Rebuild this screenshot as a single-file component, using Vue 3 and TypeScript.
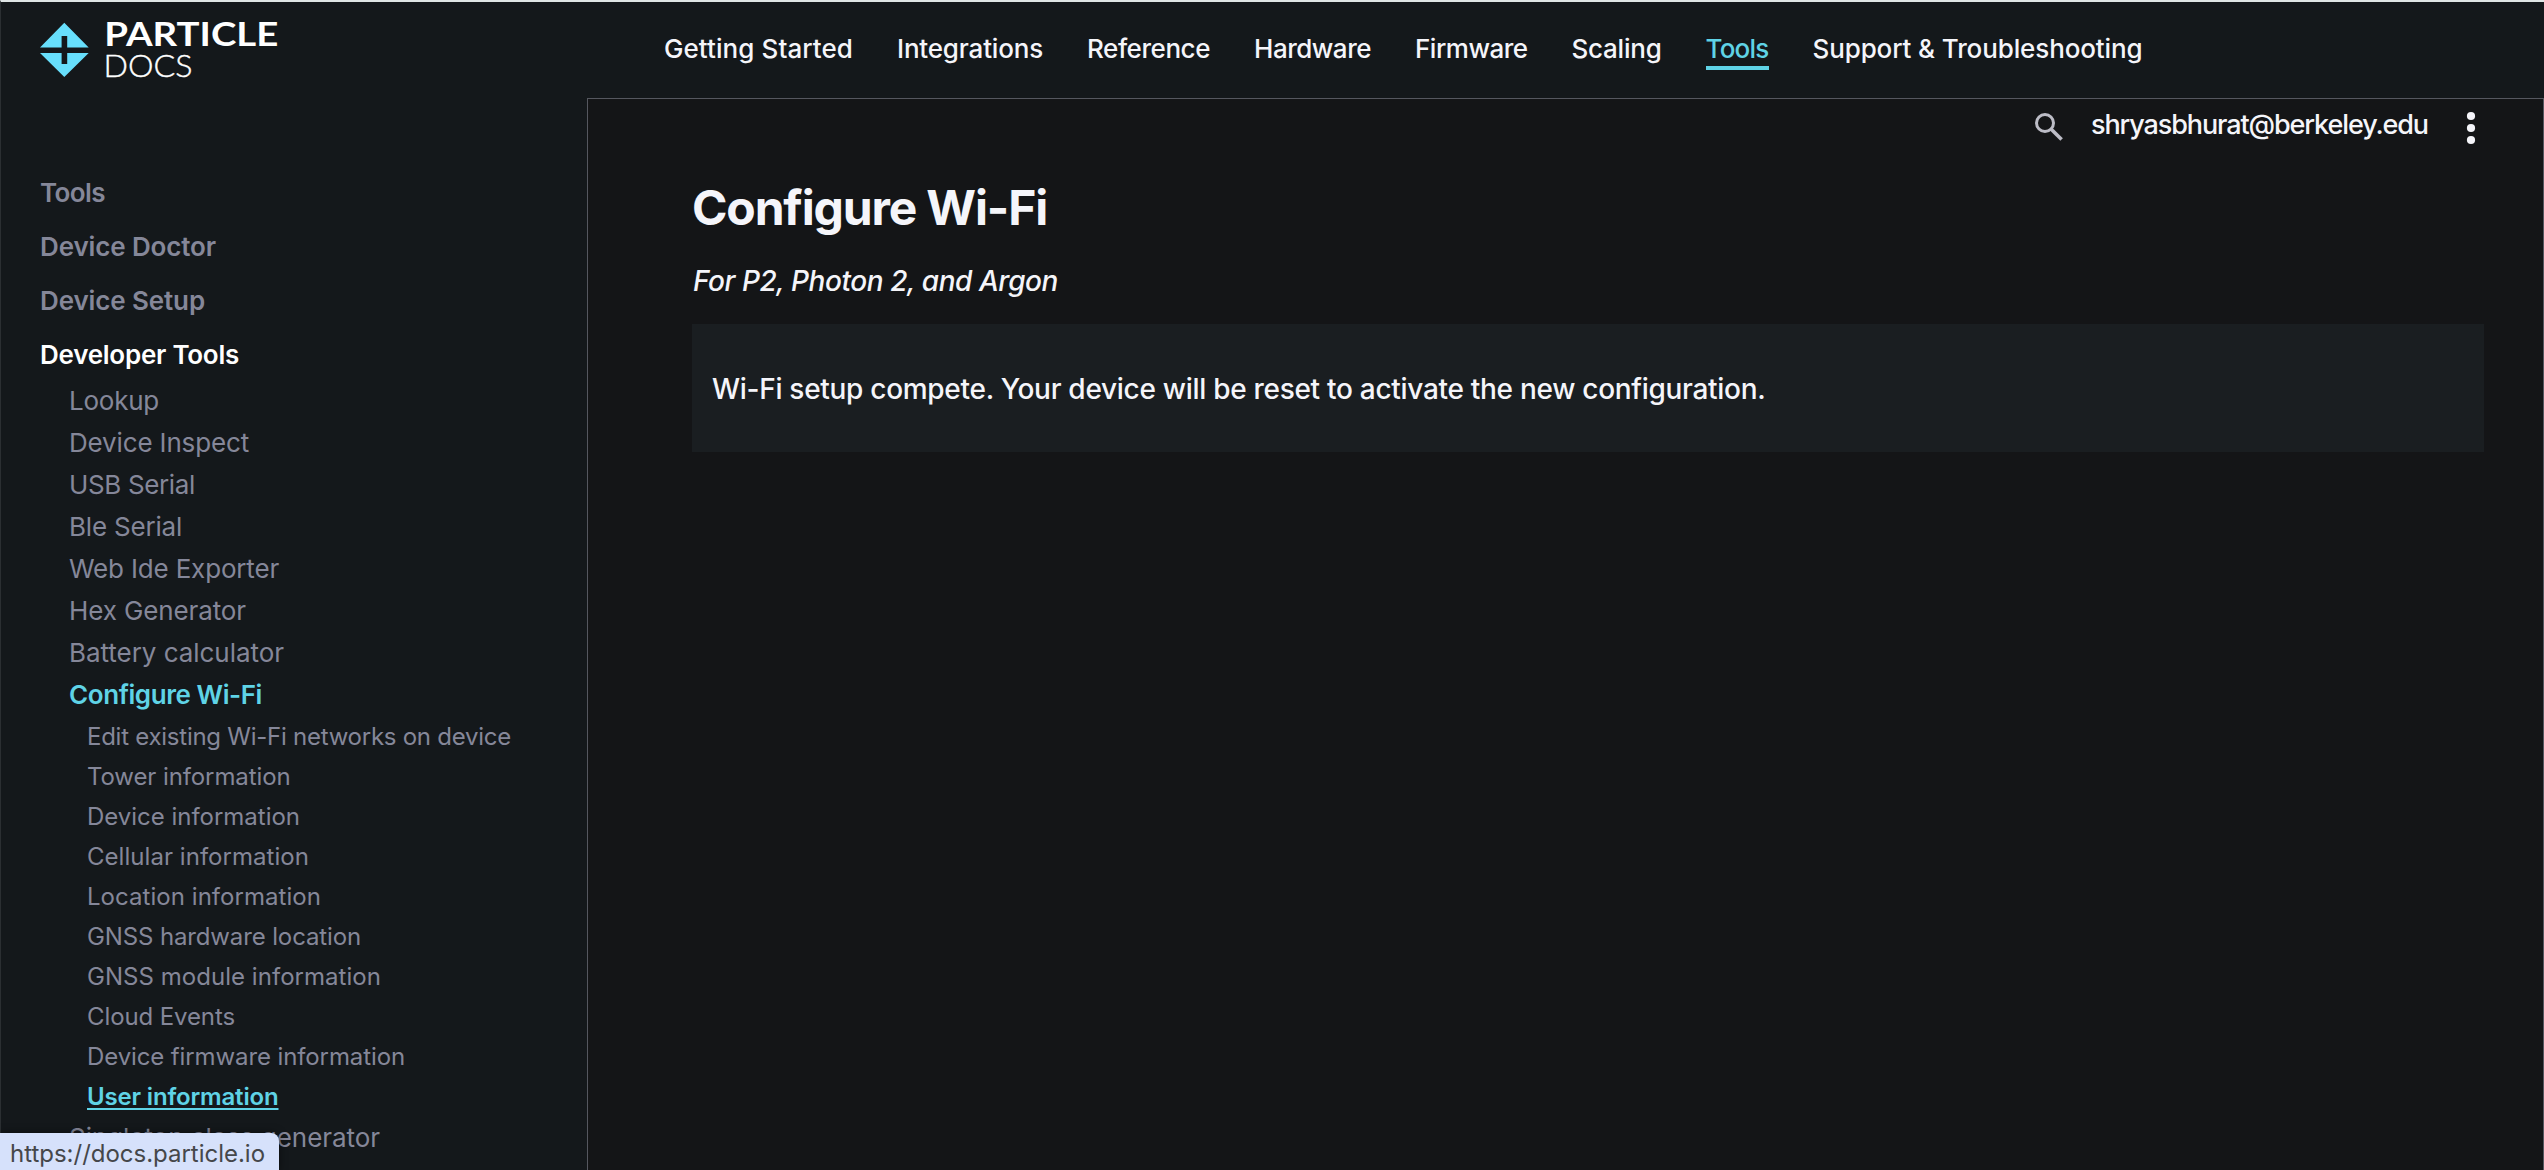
<script setup lang="ts">
import type { Directive } from 'vue'

interface Item {
  label: string
  width: number
  active?: boolean
}

// Tracks a label so that it fills the given width.
const vFit: Directive<HTMLElement, number> = {
  mounted(el, { value }) {
    const natural = el.getBoundingClientRect().width
    const count = (el.textContent ?? '').trim().length
    el.style.letterSpacing = `${(value - natural) / count}px`
  },
}

const nav: Item[] = [
  { label: 'Getting Started', width: 189 },
  { label: 'Integrations', width: 146 },
  { label: 'Reference', width: 123 },
  { label: 'Hardware', width: 117 },
  { label: 'Firmware', width: 112.5 },
  { label: 'Scaling', width: 90 },
  { label: 'Tools', width: 63, active: true },
  { label: 'Support & Troubleshooting', width: 330 },
]

const sections: Item[] = [
  { label: 'Tools', width: 65 },
  { label: 'Device Doctor', width: 176 },
  { label: 'Device Setup', width: 165 },
  { label: 'Developer Tools', width: 199, active: true },
]

const tools: Item[] = [
  { label: 'Lookup', width: 90 },
  { label: 'Device Inspect', width: 180 },
  { label: 'USB Serial', width: 126 },
  { label: 'Ble Serial', width: 113 },
  { label: 'Web Ide Exporter', width: 210 },
  { label: 'Hex Generator', width: 177 },
  { label: 'Battery calculator', width: 215 },
  { label: 'Configure Wi-Fi', width: 193, active: true },
]

const topics: Item[] = [
  { label: 'Edit existing Wi-Fi networks on device', width: 424 },
  { label: 'Tower information', width: 203.5 },
  { label: 'Device information', width: 213 },
  { label: 'Cellular information', width: 222 },
  { label: 'Location information', width: 234 },
  { label: 'GNSS hardware location', width: 274 },
  { label: 'GNSS module information', width: 294 },
  { label: 'Cloud Events', width: 148 },
  { label: 'Device firmware information', width: 318 },
  { label: 'User information', width: 191.5, active: true },
]
</script>

<template>
  <div class="page">
    <header class="header">
      <svg class="logo" width="250" height="60" viewBox="0 0 250 60">
        <path fill="#67dffc" d="M24.3 2.7 48.7 27.6H0Z M0 33H48.7L24.3 57Z" />
        <rect x="21.6" y="16" width="5.6" height="28" fill="#14181b" />
        <text class="brand" x="64.2" y="26" textLength="174" lengthAdjust="spacingAndGlyphs">PARTICLE</text>
        <text class="docs" x="63.6" y="57" textLength="89" lengthAdjust="spacingAndGlyphs">DOCS</text>
      </svg>
      <nav class="nav">
        <a v-for="n in nav" :key="n.label" :class="{ active: n.active }"><span v-fit="n.width">{{ n.label }}</span></a>
      </nav>
    </header>
    <div class="body">
      <aside class="side">
        <a v-for="s in sections" :key="s.label" class="section" :class="{ current: s.active }"><span v-fit="s.width">{{ s.label }}</span></a>
        <a v-for="t in tools" :key="t.label" class="tool" :class="{ active: t.active }"><span v-fit="t.width">{{ t.label }}</span></a>
        <div class="topics">
          <a v-for="t in topics" :key="t.label" class="topic" :class="{ active: t.active }"><span v-fit="t.width">{{ t.label }}</span></a>
        </div>
        <a class="tool"><span v-fit="311">Singleton class generator</span></a>
      </aside>
      <main class="main">
        <div class="account">
          <svg class="search" width="30" height="30" viewBox="0 0 30 30" fill="none" stroke="#bcbcc6" stroke-width="3">
            <circle cx="11" cy="11" r="8.5" />
            <path d="M17 17 27.6 27.6" stroke-width="3.6" />
          </svg>
          <span v-fit="337" class="mail">shryasbhurat@berkeley.edu</span>
          <svg class="dots" width="10" height="34" viewBox="0 0 10 34" fill="#f5f5fa">
            <circle cx="5" cy="5" r="4.1" />
            <circle cx="5" cy="17" r="4.1" />
            <circle cx="5" cy="29" r="4.1" />
          </svg>
        </div>
        <h1><span v-fit="355">Configure Wi-Fi</span></h1>
        <p class="sub"><em v-fit="365">For P2, Photon 2, and Argon</em></p>
        <div class="panel"><span v-fit="1053.5">Wi-Fi setup compete. Your device will be reset to activate the new configuration.</span></div>
      </main>
    </div>
    <div class="status"><span v-fit="255">https://docs.particle.io</span></div>
  </div>
</template>

<style>
body {
  margin: 0;
  overflow: hidden;
  background: #14181b;
}
</style>

<style scoped>
.page {
  position: relative;
  box-sizing: border-box;
  width: 2544px;
  height: 1170px;
  display: flex;
  flex-direction: column;
  border-top: 2px solid #dfe5e5;
  border-left: 1px solid #2b2f32;
  background: #14181b;
  color: #f5f5fa;
  font-family: Inter, "Liberation Sans", sans-serif;
  white-space: nowrap;
}
span,
em {
  display: inline-block;
}
.header {
  flex: none;
  height: 96px;
  display: flex;
}
.logo {
  flex: none;
  margin: 18px 0 0 39px;
  overflow: visible;
}
.brand,
.docs {
  fill: #fff;
  font-family: Lato, sans-serif;
  font-size: 32px;
}
.brand {
  font-weight: 700;
}
.docs {
  font-weight: 300;
  stroke: #fff;
  stroke-width: 0.4px;
}
.nav {
  display: flex;
  gap: 44px;
  margin: 30px 0 0 374px;
  height: 38px;
}
.nav a {
  font-size: 26px;
  font-weight: 500;
  line-height: 34px;
}
.nav .active {
  color: #5fd3e6;
  border-bottom: 4px solid #5fd3e6;
}
.body {
  flex: 1;
  display: flex;
  min-height: 0;
}
.side {
  flex: none;
  box-sizing: border-box;
  width: 586px;
  overflow: hidden;
  padding-top: 68px;
  color: #858799;
}
.side a {
  display: block;
}
.section {
  height: 54px;
  line-height: 54px;
  padding-left: 39px;
  font-size: 26px;
  font-weight: 600;
}
.section.current {
  color: #fff;
  height: 52px;
}
.tool {
  height: 42px;
  line-height: 42px;
  padding-left: 68px;
  font-size: 26px;
}
.topics {
  padding-top: 1px;
}
.topic {
  height: 40px;
  line-height: 40px;
  padding-left: 86px;
  font-size: 24px;
}
.side .active {
  color: #5fd3e6;
  font-weight: 600;
}
.topic.active span {
  text-decoration: underline;
  text-decoration-thickness: 2px;
  text-underline-offset: 3px;
}
.main {
  flex: 1;
  border: 1px solid #55575f;
  border-bottom: 0;
  background: #141517;
  padding: 0 59px 0 104px;
}
.account {
  display: flex;
  justify-content: flex-end;
  margin-top: 12px;
  height: 34px;
}
.search {
  margin-top: 1px;
}
.mail {
  margin-left: 27px;
  font-size: 27px;
  font-weight: 500;
  line-height: 28px;
}
.dots {
  margin: 0 8px 0 38px;
}
h1 {
  margin: 34px 0 0;
  font-size: 48px;
  font-weight: 700;
  line-height: 58px;
}
.sub {
  margin: 24px 0 0;
  font-size: 28px;
  font-weight: 500;
  line-height: 40px;
}
.sub em {
  margin-left: 1px;
}
.panel {
  box-sizing: border-box;
  margin-top: 23px;
  height: 128px;
  display: flex;
  align-items: center;
  padding: 2px 0 0 20px;
  background: #1a1e21;
  font-size: 28px;
  font-weight: 500;
}
.status {
  position: absolute;
  left: -1px;
  bottom: 0;
  width: 279px;
  height: 37px;
  box-sizing: border-box;
  padding-left: 10px;
  border-top-right-radius: 8px;
  background: #d6e1fb;
  color: #45474a;
  font-size: 24px;
  line-height: 41px;
  box-shadow: 0 0 8px rgba(0, 0, 0, 0.5);
}
</style>
